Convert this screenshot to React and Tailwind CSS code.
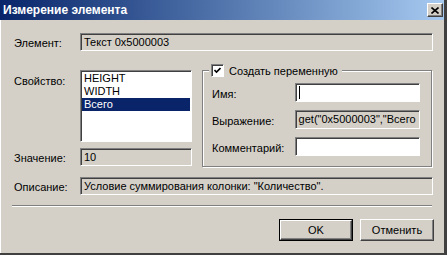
import clsx from "clsx";

const sunken =
  "border border-t-[#808080] border-l-[#808080] border-b-white border-r-white shadow-[inset_1px_1px_0_#404040]";
const raised =
  "border border-t-white border-l-white border-r-[#404040] border-b-[#404040] shadow-[inset_-1px_-1px_0_#808080]";

function Field({ className, grey, children }) {
  return (
    <div
      className={clsx(
        sunken,
        "flex items-center overflow-hidden whitespace-nowrap pl-[3px]",
        grey ? "bg-[#d4d0c8]" : "bg-white",
        className
      )}
    >
      {children}
    </div>
  );
}

function Row({ label, children, className }) {
  return (
    <div className={clsx("flex items-center", className)}>
      <div className="w-[66px] pt-[3px]">{label}</div>
      {children}
    </div>
  );
}

function Button({ children, isDefault }) {
  if (isDefault) {
    return (
      <div className="w-[74px] h-[22px] border border-black">
        <div className={clsx(raised, "h-full flex items-center justify-center")}>
          {children}
        </div>
      </div>
    );
  }
  return (
    <div className={clsx(raised, "w-[74px] h-[22px] flex items-center justify-center")}>
      {children}
    </div>
  );
}

export default function App() {
  const items = ["HEIGHT", "WIDTH", "Всего"];
  return (
    <div className="w-[447px] h-[255px] bg-[#d4d0c8] flex flex-col border-r-[3px] border-r-[#404040] border-b-2 border-b-[#404040] font-['Liberation_Sans',Arial,sans-serif] text-[11px] text-black leading-none">
      <div className="h-[20px] shrink-0 flex items-center justify-between bg-gradient-to-r from-[#0a246a] to-[#a6caf0] pl-[3px] pr-[1px]">
        <span className="text-white font-bold text-[12px]">Измерение элемента</span>
        <div className={clsx(raised, "w-[16px] h-[14px] bg-[#d4d0c8] flex items-center justify-center")}>
          <svg width="8" height="7" viewBox="0 0 8 7">
            <path d="M0.5 0.5L7.5 6.5M7.5 0.5L0.5 6.5" stroke="black" strokeWidth="1.6" />
          </svg>
        </div>
      </div>

      <div className="flex-1 flex flex-col border-l border-l-white pl-[13px]">
        <Row label="Элемент:" className="mt-[13px]">
          <Field grey className="w-[353px] h-[18px]">Текст 0x5000003</Field>
        </Row>

        <div className="flex mt-[19px]">
          <div className="flex flex-col">
            <div className="flex">
              <div className="w-[66px] pt-[6px]">Свойство:</div>
              <div className={clsx(sunken, "w-[112px] h-[72px] bg-white pt-[1px]")}>
                {items.map((it, i) => (
                  <div
                    key={it}
                    className={clsx(
                      "h-[13px] leading-[13px] pl-[2px] mx-[1px]",
                      i === 2 ? "bg-[#0a246a] text-white" : ""
                    )}
                  >
                    {it}
                  </div>
                ))}
              </div>
            </div>
            <Row label="Значение:" className="mt-[6px]">
              <Field grey className="w-[112px] h-[18px]">10</Field>
            </Row>
          </div>

          <div className="relative ml-[10px] w-[230px] h-[97px] border border-[#808080] shadow-[inset_1px_1px_0_#fff,1px_1px_0_#fff] pl-[9px] pr-[11px] pt-[12px] flex flex-col gap-[8px]">
            <div className="absolute left-[6px] -top-[7px] bg-[#d4d0c8] flex items-center gap-[5px] pl-[2px] pr-[4px]">
              <div className={clsx(sunken, "w-[13px] h-[13px] bg-white flex items-center justify-center")}>
                <svg width="7" height="7" viewBox="0 0 7 7">
                  <path d="M0.5 3L2.5 5L6.5 1" stroke="black" strokeWidth="1.6" fill="none" />
                </svg>
              </div>
              <span className="pt-[2px]">Создать переменную</span>
            </div>
            <div className="flex items-center">
              <div className="w-[83px] pt-[3px]">Имя:</div>
              <Field className="w-[126px] h-[19px]">
                <div className="w-px h-[13px] bg-black" />
              </Field>
            </div>
            <div className="flex items-center">
              <div className="w-[83px] pt-[3px]">Выражение:</div>
              <Field grey className="w-[126px] h-[19px]">get("0x5000003","Всего</Field>
            </div>
            <div className="flex items-center">
              <div className="w-[83px] pt-[3px]">Комментарий:</div>
              <Field className="w-[126px] h-[19px]" />
            </div>
          </div>
        </div>

        <Row label="Описание:" className="mt-[10px]">
          <Field grey className="w-[353px] h-[18px]">Условие суммирования колонки: "Количество".</Field>
        </Row>

        <div className="mt-[10px] -ml-[2px] w-[420px] h-[2px] border-t border-t-[#808080] border-b border-b-white" />

        <div className="mt-[12px] flex justify-end gap-[7px] pr-[10px]">
          <Button isDefault>OK</Button>
          <Button>Отменить</Button>
        </div>
      </div>
    </div>
  );
}
